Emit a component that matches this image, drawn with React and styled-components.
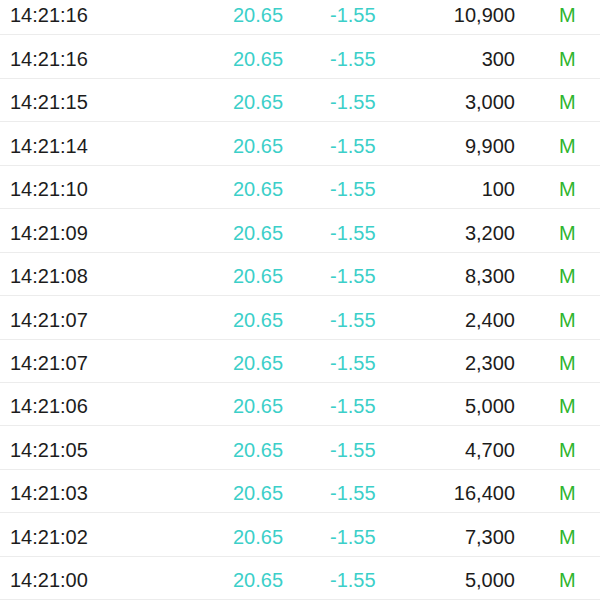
import React from "react";
import styled, { createGlobalStyle } from "styled-components";

const Global = createGlobalStyle`
  html, body { margin: 0; padding: 0; background: #ffffff; }
  body { overflow: hidden; font-family: "Liberation Sans", Arial, sans-serif; }
`;

const List = styled.div`
  margin-top: -8px;
  display: flex;
  flex-direction: column;
`;

const Row = styled.div`
  box-sizing: border-box;
  height: 43.45px;
  display: grid;
  grid-template-columns: 223px 97px 90px 95px 1fr;
  align-items: center;
  padding: 4.5px 0 0 10px;
  border-bottom: 1px solid #ececec;
  font-size: 20px;
  line-height: 24px;
`;

const Cell = styled.span`
  color: ${(p) => p.$color || "#1c1c1c"};
  text-align: ${(p) => p.$align || "left"};
  padding-left: ${(p) => p.$pad || 0}px;
  white-space: nowrap;
`;

const rows = [
  ["14:21:16", "10,900"],
  ["14:21:16", "300"],
  ["14:21:15", "3,000"],
  ["14:21:14", "9,900"],
  ["14:21:10", "100"],
  ["14:21:09", "3,200"],
  ["14:21:08", "8,300"],
  ["14:21:07", "2,400"],
  ["14:21:07", "2,300"],
  ["14:21:06", "5,000"],
  ["14:21:05", "4,700"],
  ["14:21:03", "16,400"],
  ["14:21:02", "7,300"],
  ["14:21:00", "5,000"],
];

export default function App() {
  return (
    <>
      <Global />
      <List>
        {rows.map(([t, v], i) => (
          <Row key={i}>
            <Cell>{t}</Cell>
            <Cell $color="#3ccfc9">20.65</Cell>
            <Cell $color="#3ccfc9">-1.55</Cell>
            <Cell $align="right">{v}</Cell>
            <Cell $color="#2fb52f" $pad={44}>M</Cell>
          </Row>
        ))}
      </List>
    </>
  );
}
